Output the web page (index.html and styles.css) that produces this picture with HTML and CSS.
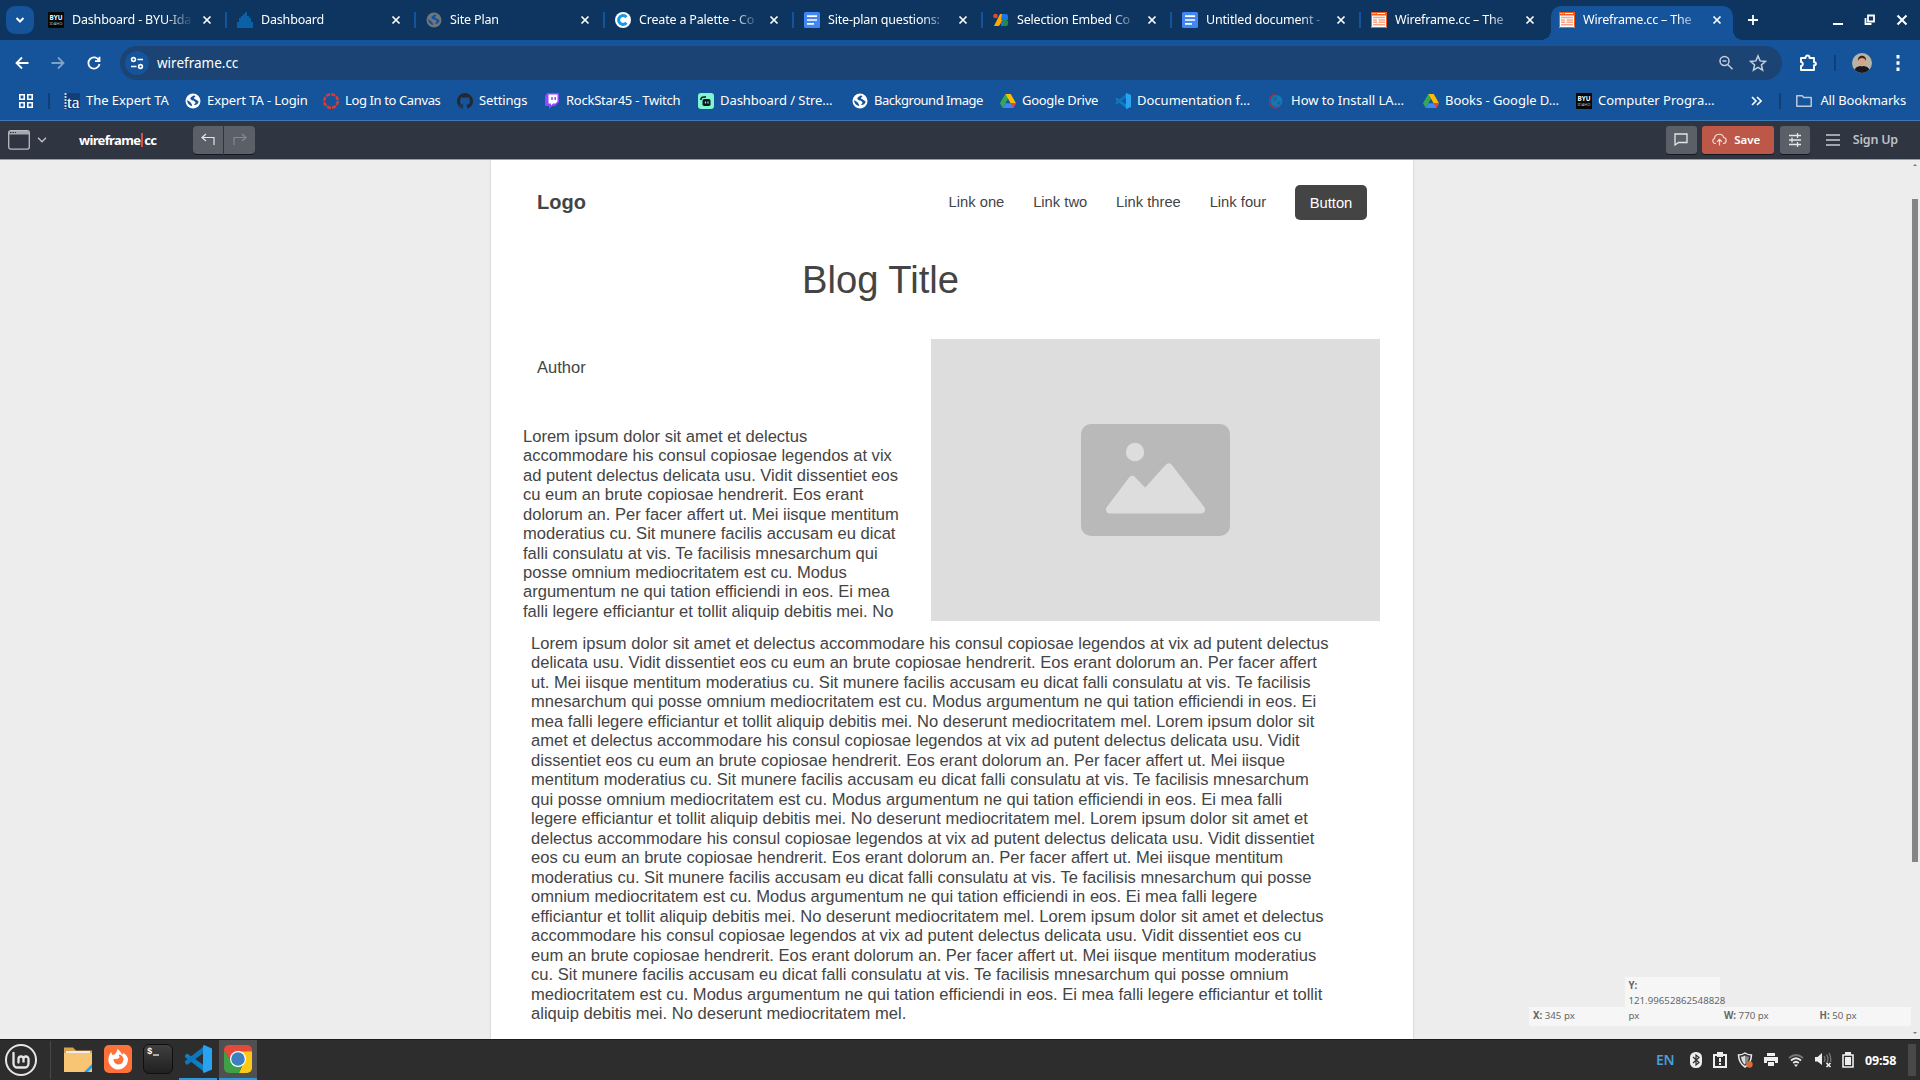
FILE: index.html
```html
<!DOCTYPE html>
<html lang="en">
<head>
<meta charset="utf-8">
<title>Wireframe.cc – The go-to wireframing tool</title>
<link rel="stylesheet" href="styles.css">
</head>
<body>
<svg class="defs" width="0" height="0" aria-hidden="true">
  <symbol id="close" viewBox="0 0 10 10"><path d="M1.500 1.500l7 7M8.500 1.500l-7 7" stroke="currentColor" stroke-width="1.700" fill="none"/></symbol>
  <symbol id="byu" viewBox="0 0 16 16"><path fill="#060606" d="M0 0h16v16H0z"/><text x="8" y="7.600" font-size="6.200" font-weight="700" text-anchor="middle" fill="#fff" textLength="13" lengthAdjust="spacingAndGlyphs">BYU</text><text x="8" y="12.500" font-size="4" text-anchor="middle" fill="#bbb" textLength="13" lengthAdjust="spacingAndGlyphs">IDAHO</text></symbol>
  <symbol id="globe" viewBox="0 0 16 16"><circle cx="8" cy="8" r="7.500" fill="currentColor"/><path class="land" d="M8.500 2.500c-1 1-3.500 1.500-3 3.500.5 1.500 2 1.500 3 1.500.8 1 2 1 2 2s-1 1.200-1.500 2.500c2 .5 4.500-1 4.500-3.500 0-.8-1.500-.5-2-1.500s-2.500-.8-2.500-1.800 1.500-1.200 1.500-2.200zM2 7c.2 3 2 5.500 5 6 .5-1-.5-2-1-3S3.500 8 2 7z"/></symbol>
  <symbol id="doc" viewBox="0 0 16 16"><rect width="16" height="16" rx="1.500" fill="#4285f4"/><path d="M3 4.200h10M3 8h10M3 11.800h7" stroke="#fff" stroke-width="1.700"/></symbol>
  <symbol id="wire" viewBox="0 0 16 16"><path fill="#fff" d="M0 0h16v16H0z"/><path d="M.5.500h15v15H.5z" fill="none" stroke="#f4591e"/><path fill="#f4591e" d="M0 0h16v3.500H0z"/><path fill="#fff" d="M1.500 1h1v1h-1zM3.500 1h1v1h-1zM6 1h8v1H6z"/><path d="M2 5.500h12M2 8h4M7.500 8H14M2 10.200h4M7.500 10.200H14M2 12.800h12" stroke="#f8a585" stroke-width="1.400"/></symbol>
  <symbol id="drive" viewBox="0 0 16 14"><path fill="#34a853" d="M5.300 0L0 9.300 2.700 14 8 4.700z"/><path fill="#fbbc04" d="M5.300 0h5.400L16 9.300h-5.400z"/><path fill="#4285f4" d="M2.700 14h10.600L16 9.300H5.300z"/><path fill="#ea4335" d="M13.300 14L16 9.300h-5.300z"/></symbol>
  <symbol id="vscode" viewBox="0 0 28 28"><path fill="#0d7fc9" d="M1 10.200L3 8.500 21 21v6.500L1 12z"/><path fill="#0f76bd" d="M1 18L3 20 21 7V.5L1 16z"/><path fill="#27a3f0" d="M20 0l8 3.500v21L20 28l-1-1V1z"/></symbol>
</svg>

<header class="tabstrip">
  <button class="tab-search"><svg width="10" height="8" viewBox="0 0 10 8"><path d="M1.500 2L5 5.500 8.500 2" fill="none" stroke="#fff" stroke-width="2"/></svg></button>
  <div class="tab"><svg class="fav"><use href="#byu"/></svg><span class="title">Dashboard - BYU-Idaho</span><svg class="x"><use href="#close"/></svg></div>
  <div class="tab"><svg class="fav" viewBox="0 0 16 16"><path d="M1 16V10M3 16V6M5 16V4M7 16V2M9 16V0M11 16V4M13 16V6M15 16V10" stroke="#0c79ce" stroke-width="1.300"/></svg><span class="title">Dashboard</span><svg class="x"><use href="#close"/></svg></div>
  <div class="tab"><svg class="fav gray"><use href="#globe"/></svg><span class="title">Site Plan</span><svg class="x"><use href="#close"/></svg></div>
  <div class="tab"><svg class="fav" viewBox="0 0 16 16"><circle cx="8" cy="8" r="8" fill="#fff"/><path d="M11.400 5.200A4.400 4.400 0 1 0 11.400 10.800" fill="none" stroke="#149be8" stroke-width="3"/></svg><span class="title">Create a Palette - Co</span><svg class="x"><use href="#close"/></svg></div>
  <div class="tab"><svg class="fav"><use href="#doc"/></svg><span class="title">Site-plan questions:</span><svg class="x"><use href="#close"/></svg></div>
  <div class="tab"><svg class="fav" viewBox="0 0 16 16"><circle cx="2.500" cy="4" r="2.300" fill="#ea4335"/><path d="M7 2h4v4L6 14H1z" fill="#fbab00"/><path d="M9 2h4a2 2 0 0 1 2 2v4H8z" fill="#1a73e8"/><circle cx="12" cy="11" r="3.200" fill="#1e8e3e"/><path d="M8 9h2v5H8z" fill="#1a73e8"/></svg><span class="title">Selection Embed Co</span><svg class="x"><use href="#close"/></svg></div>
  <div class="tab"><svg class="fav"><use href="#doc"/></svg><span class="title">Untitled document -</span><svg class="x"><use href="#close"/></svg></div>
  <div class="tab last"><svg class="fav"><use href="#wire"/></svg><span class="title">Wireframe.cc – The</span><svg class="x"><use href="#close"/></svg></div>
  <div class="tab active"><svg class="fav"><use href="#wire"/></svg><span class="title">Wireframe.cc – The</span><svg class="x"><use href="#close"/></svg></div>
  <svg class="plus" width="12" height="12" viewBox="0 0 12 12"><path d="M6 1v10M1 6h10" stroke="#fff" stroke-width="1.800"/></svg>
  <div class="window-controls">
    <svg width="12" height="12" viewBox="0 0 12 12"><path d="M1 10h10" stroke="#fff" stroke-width="2"/></svg>
    <svg width="12" height="12" viewBox="0 0 12 12"><path d="M4 1.500h6v6H4zM1.500 4v6h6" stroke="#fff" stroke-width="1.800" fill="none"/></svg>
    <svg width="12" height="12" viewBox="0 0 12 12"><path d="M1.500 1.500l9 9M10.500 1.500l-9 9" stroke="#fff" stroke-width="2"/></svg>
  </div>
</header>

<div class="toolbar">
  <svg class="nav" viewBox="0 0 16 16"><path d="M14.500 8H3M8 2.500L2.500 8 8 13.500" fill="none" stroke="#fff" stroke-width="1.800"/></svg>
  <svg class="nav dim" viewBox="0 0 16 16"><path d="M1.500 8H13M8 2.500L13.500 8 8 13.500" fill="none" stroke="#fff" stroke-width="1.800"/></svg>
  <svg class="nav" viewBox="0 0 16 16"><path d="M13 5.500A5.600 5.600 0 1 0 13.500 9M13.500 1.800v4.400H9" fill="none" stroke="#fff" stroke-width="1.800"/></svg>
  <div class="omnibox">
    <span class="site-info"><svg width="14" height="14" viewBox="0 0 14 14"><g fill="none" stroke="#fff" stroke-width="1.600"><circle cx="3.500" cy="3.500" r="1.900"/><path d="M7.500 3.500H13M1 10.500h5.500"/><circle cx="10.500" cy="10.500" r="1.900"/></g></svg></span>
    <span class="url">wireframe.cc</span>
    <svg class="lens" width="16" height="16" viewBox="0 0 16 16"><g fill="none" stroke="#c6cfda" stroke-width="1.500"><circle cx="6.500" cy="6" r="4.500"/><path d="M4.500 6h4M9.800 9.500l4.700 4.700"/></g></svg>
    <svg width="18" height="18" viewBox="0 0 18 18"><path d="M9 2l2.100 4.900 5.300.5-4 3.500 1.200 5.200L9 13.400l-4.600 2.700 1.200-5.200-4-3.500 5.300-.5z" fill="none" stroke="#c6cfda" stroke-width="1.500"/></svg>
  </div>
  <svg class="ext" width="18" height="18" viewBox="0 0 18 18"><path d="M2 4h4.500V3.500a2 2 0 0 1 4 0V4H15v4.300h.5a1.400 1.400 0 0 1 0 2.900H15V16H2v-4c2.200 0 2.600-4 0-4z" fill="none" stroke="#fff" stroke-width="1.900" stroke-linejoin="round"/></svg>
  <span class="sep tsep"></span>
  <svg class="avatar" width="20" height="20" viewBox="0 0 20 20"><clipPath id="av"><circle cx="10" cy="10" r="10"/></clipPath><g clip-path="url(#av)"><path fill="#b9b3a4" d="M0 0h20v20H0z"/><path fill="#18191e" d="M2 20c0-6 4-7 8-7s8 1 8 7z"/><ellipse cx="10" cy="8.500" rx="3.600" ry="5" fill="#d9a385"/><path fill="#3a2420" d="M6 8c-1-7 9-7 8 0-1-4-7-4-8 0z"/></g></svg>
  <svg class="dots" width="4" height="16" viewBox="0 0 4 16"><path fill="#fff" d="M.5 0h3v3.500h-3zM.5 6.200h3v3.500h-3zM.5 12.500h3V16h-3z"/></svg>
</div>

<nav class="bookmarks">
  <svg class="apps" width="14" height="14" viewBox="0 0 14 14"><path d="M.8.800h4.400v4.400H.8zM8.800.800h4.400v4.400H8.800zM.8 8.800h4.400v4.400H.8zM8.800 8.800h4.400v4.400H8.800z" fill="none" stroke="#fff" stroke-width="1.600"/></svg>
  <span class="sep bsep"></span>
  <a class="bm b1"><svg viewBox="0 0 16 16"><path fill="#123f78" d="M0 0h16v16H0z"/><path d="M1.500 0v16" stroke="#cbd6e4" stroke-width="2" stroke-dasharray="2 1"/><text x="3" y="15" font-size="17" font-family="Liberation Serif" fill="#fff" textLength="12.500" lengthAdjust="spacingAndGlyphs">ta</text></svg><span>The Expert TA</span></a>
  <a class="bm b2"><svg class="white"><use href="#globe"/></svg><span>Expert TA - Login</span></a>
  <a class="bm b3"><svg viewBox="0 0 16 16"><circle cx="8" cy="8" r="6.800" fill="none" stroke="#e23a2e" stroke-width="2.400" stroke-dasharray="4.200 1.140"/></svg><span>Log In to Canvas</span></a>
  <a class="bm b4"><svg viewBox="0 0 16 16"><path fill="#24292f" d="M8 0a8 8 0 0 0-2.500 15.600c.4.100.5-.2.500-.4v-1.500c-2 .5-2.600-.5-2.800-1-.1-.3-.6-1.100-1-1.300 1.200-.2 1.500.8 2 1.300.6.600 1.300.4 1.900.2.100-.5.300-.8.500-1C4.800 11.700 3 11 3 8c0-.8.300-1.500.8-2.100-.1-.2-.3-1 .1-2 0 0 .7-.2 2.200.8 1.200-.3 2.600-.3 3.800 0 1.500-1 2.200-.8 2.200-.8.400 1 .2 1.800.1 2 .5.600.8 1.300.8 2.100 0 3-1.800 3.700-3.600 3.900.4.400.6.900.6 1.500v1.800c0 .2.100.5.500.4A8 8 0 0 0 8 0z"/></svg><span>Settings</span></a>
  <a class="bm b5"><svg viewBox="0 0 16 16"><path fill="#9146ff" d="M3 0h12v9l-4 4H8l-3 3v-3H1V3z"/><path fill="#fff" d="M4.500 1.500h9v7l-2 2H9l-2 2v-2H4.500z"/><path d="M8 4v3M11.200 4v3" stroke="#9146ff" stroke-width="1.500"/></svg><span>RockStar45 - Twitch</span></a>
  <a class="bm b6"><svg viewBox="0 0 16 16"><rect width="16" height="16" rx="3" fill="#80f5d2"/><rect x="4.500" y="6" width="8" height="7" rx="1.800" fill="#09161d"/><path d="M3 7V5.500Q3.500 4 6 4h2" fill="none" stroke="#09161d" stroke-width="1.500"/><path d="M7.500 8.500v2M10 8.500v2" stroke="#80f5d2" stroke-width="1.200"/></svg><span>Dashboard / Stre…</span></a>
  <a class="bm b7"><svg class="white"><use href="#globe"/></svg><span>Background Image</span></a>
  <a class="bm b8"><svg><use href="#drive"/></svg><span>Google Drive</span></a>
  <a class="bm b9"><svg><use href="#vscode"/></svg><span>Documentation f…</span></a>
  <a class="bm b10"><svg viewBox="0 0 16 16"><circle cx="7.500" cy="8" r="6" fill="#1279b5"/><path d="M11 13.500A6.700 6.700 0 1 1 6 1.500" fill="none" stroke="#b82a3e" stroke-width="1.300"/><path d="M4 5l3-1 1 3-3 1zM9 8l3 1-2 3-2-1z" fill="#1f619d"/></svg><span>How to Install LA…</span></a>
  <a class="bm b11"><svg><use href="#drive"/></svg><span>Books - Google D…</span></a>
  <a class="bm b12"><svg><use href="#byu"/></svg><span>Computer Progra…</span></a>
  <svg class="more" width="11" height="10" viewBox="0 0 11 10"><path d="M1 1l4 4-4 4M6 1l4 4-4 4" fill="none" stroke="#fff" stroke-width="1.600"/></svg>
  <span class="sep msep"></span>
  <a class="bm all"><svg viewBox="0 0 16 16"><path d="M.8 2.800h5.400l1.600 1.700h7.400v8.700H.8z" fill="none" stroke="#bcc9da" stroke-width="1.500" stroke-linejoin="round"/></svg><span>All Bookmarks</span></a>
</nav>

<div class="appbar">
  <svg class="device" width="22" height="20" viewBox="0 0 22 20"><rect x=".7" y=".7" width="20.600" height="18.400" rx="2" fill="none" stroke="#b9bcc1" stroke-width="1.300"/><path d="M1 1h20v3.500H1z" fill="#a5a8ae"/><path d="M2 2.500h6" stroke="#2f3541" stroke-dasharray="1.500 1"/></svg>
  <svg class="chev" width="10" height="6" viewBox="0 0 10 6"><path d="M1 .8l4 4 4-4" fill="none" stroke="#c4c6ca" stroke-width="1.300"/></svg>
  <span class="brand">wireframe<i></i>cc</span>
  <button class="btn undo"><svg width="14" height="13" viewBox="0 0 14 13"><path d="M5 1L1 4.500 5 8M1 4.500h12V12" fill="none" stroke="#e4e5e7" stroke-width="1.200"/></svg></button>
  <button class="btn redo"><svg width="14" height="13" viewBox="0 0 14 13"><path d="M9 1l4 3.500L9 8M13 4.500H1V12" fill="none" stroke="#858990" stroke-width="1.200"/></svg></button>
  <button class="btn note"><svg width="14" height="13" viewBox="0 0 14 13"><path d="M1 1h12v8.500H4.500L1 12z" fill="none" stroke="#e4e5e7" stroke-width="1.300"/></svg></button>
  <button class="btn save"><svg width="15" height="13" viewBox="0 0 15 13"><path d="M4 10.500H3A2.600 2.600 0 0 1 2.500 5.500C3 0 11 0 11.500 4.500c3.500 0 3.500 6 0 6H11M7.500 12.500V6.500M5 8.800l2.500-2.500L10 8.800" fill="none" stroke="#f5dcd8" stroke-width="1.200"/></svg>Save</button>
  <button class="btn sliders"><svg width="14" height="14" viewBox="0 0 14 14"><path d="M1 2.500h12M1 7h12M1 11.500h12M9.500 0v5M4 4.500v5M9.500 9v5" fill="none" stroke="#e4e5e7" stroke-width="1.300"/></svg></button>
  <svg class="burger" width="14" height="12" viewBox="0 0 14 12"><path d="M0 1h14M0 6h14M0 11h14" stroke="#c9cbcf" stroke-width="1.300"/></svg>
  <span class="signup">Sign Up</span>
</div>

<main class="workspace">
  <article class="page">
    <div class="page-nav">
      <strong class="logo">Logo</strong>
      <a>Link one</a><a>Link two</a><a>Link three</a><a>Link four</a>
      <span class="cta">Button</span>
    </div>
    <h1>Blog Title</h1>
    <section class="hero">
      <div class="hero-text">
        <p class="author">Author</p>
        <p class="copy intro">Lorem ipsum dolor sit amet et delectus<br>accommodare his consul copiosae legendos at vix<br>ad putent delectus delicata usu. Vidit dissentiet eos<br>cu eum an brute copiosae hendrerit. Eos erant<br>dolorum an. Per facer affert ut. Mei iisque mentitum<br>moderatius cu. Sit munere facilis accusam eu dicat<br>falli consulatu at vis. Te facilisis mnesarchum qui<br>posse omnium mediocritatem est cu. Modus<br>argumentum ne qui tation efficiendi in eos. Ei mea<br>falli legere efficiantur et tollit aliquip debitis mei. No</p>
      </div>
      <div class="picture"><svg width="149" height="112" viewBox="0 0 149 112"><rect width="149" height="112" rx="10" fill="#b9b9b9"/><circle cx="54" cy="28" r="9.200" fill="#ddd"/><path d="M29 85.500L51.300 56 64.300 69.500 87.700 43.500 120 85.500z" fill="#ddd" class="peaks"/></svg></div>
    </section>
    <p class="copy body-copy">Lorem ipsum dolor sit amet et delectus accommodare his consul copiosae legendos at vix ad putent delectus<br>delicata usu. Vidit dissentiet eos cu eum an brute copiosae hendrerit. Eos erant dolorum an. Per facer affert<br>ut. Mei iisque mentitum moderatius cu. Sit munere facilis accusam eu dicat falli consulatu at vis. Te facilisis<br>mnesarchum qui posse omnium mediocritatem est cu. Modus argumentum ne qui tation efficiendi in eos. Ei<br>mea falli legere efficiantur et tollit aliquip debitis mei. No deserunt mediocritatem mel. Lorem ipsum dolor sit<br>amet et delectus accommodare his consul copiosae legendos at vix ad putent delectus delicata usu. Vidit<br>dissentiet eos cu eum an brute copiosae hendrerit. Eos erant dolorum an. Per facer affert ut. Mei iisque<br>mentitum moderatius cu. Sit munere facilis accusam eu dicat falli consulatu at vis. Te facilisis mnesarchum<br>qui posse omnium mediocritatem est cu. Modus argumentum ne qui tation efficiendi in eos. Ei mea falli<br>legere efficiantur et tollit aliquip debitis mei. No deserunt mediocritatem mel. Lorem ipsum dolor sit amet et<br>delectus accommodare his consul copiosae legendos at vix ad putent delectus delicata usu. Vidit dissentiet<br>eos cu eum an brute copiosae hendrerit. Eos erant dolorum an. Per facer affert ut. Mei iisque mentitum<br>moderatius cu. Sit munere facilis accusam eu dicat falli consulatu at vis. Te facilisis mnesarchum qui posse<br>omnium mediocritatem est cu. Modus argumentum ne qui tation efficiendi in eos. Ei mea falli legere<br>efficiantur et tollit aliquip debitis mei. No deserunt mediocritatem mel. Lorem ipsum dolor sit amet et delectus<br>accommodare his consul copiosae legendos at vix ad putent delectus delicata usu. Vidit dissentiet eos cu<br>eum an brute copiosae hendrerit. Eos erant dolorum an. Per facer affert ut. Mei iisque mentitum moderatius<br>cu. Sit munere facilis accusam eu dicat falli consulatu at vis. Te facilisis mnesarchum qui posse omnium<br>mediocritatem est cu. Modus argumentum ne qui tation efficiendi in eos. Ei mea falli legere efficiantur et tollit<br>aliquip debitis mei. No deserunt mediocritatem mel.</p>
  </article>
  <div class="readout">
    <span><b>X:</b> 345 px</span>
    <span class="y"><b>Y:</b><br>121.99652862548828<br>px</span>
    <span><b>W:</b> 770 px</span>
    <span><b>H:</b> 50 px</span>
  </div>
  <div class="scrollbar"><i class="up"></i><i class="thumb"></i><i class="down"></i></div>
</main>

<footer class="taskbar">
  <svg class="mint" width="32" height="32" viewBox="0 0 32 32"><circle cx="16" cy="16" r="15" fill="none" stroke="#e6e6e6" stroke-width="2"/><path d="M8.500 9v10.500a4 4 0 0 0 4 4h7a4 4 0 0 0 4-4V15a2.500 2.500 0 0 0-5 0v3.500V15a2.500 2.500 0 0 0-5 0v3.500" fill="none" stroke="#e6e6e6" stroke-width="2.300" stroke-linecap="round"/></svg>
  <span class="task-sep"></span>
  <span class="task"><svg width="28" height="28" viewBox="0 0 28 28"><path fill="#d9a24d" d="M0 2.500h9l3 3h16V14H0z"/><path fill="#eee" d="M2 6h24v4H2z"/><path fill="#f8c575" d="M0 8h28v19H0z"/><path fill="#27a0e6" d="M28 19v4l-4 4h-4z"/></svg></span>
  <span class="task"><svg width="28" height="28" viewBox="0 0 28 28"><rect width="28" height="28" rx="5" fill="#ff7139"/><path fill="#fff" d="M14 24.500A10 10 0 0 1 5 11c.5-1.500 1.500-2.500 2-4l1.500 3 2-.5c1-1 2-2 3-5.500 2 2 4 3 4.500 6l1.500-2c3 2 4.500 4 4.500 7a10 10 0 0 1-10 9.500z"/><path fill="#ff7139" d="M9.500 14a5 5 0 1 0 8-3.500c-1-.8-2-1-3-.500 1 1 1.500 2 .5 3s-2 .5-3 1.200z"/></svg></span>
  <span class="task"><svg width="30" height="30" viewBox="0 0 30 30"><defs><linearGradient id="term" x2="0" y2="1"><stop stop-color="#404040"/><stop offset="1" stop-color="#202020"/></linearGradient></defs><rect x=".5" y=".5" width="29" height="29" rx="5.500" fill="url(#term)" stroke="#101010"/><text x="4" y="10" font-family="Liberation Mono" font-size="9" font-weight="700" fill="#fff">$</text><path d="M10 11h6" stroke="#fff" stroke-width="1.200"/></svg></span>
  <span class="task open"><svg width="28" height="28"><use href="#vscode"/></svg></span>
  <span class="task open current"><svg width="28" height="28" viewBox="0 0 28 28"><clipPath id="sq"><rect width="28" height="28" rx="5"/></clipPath><g clip-path="url(#sq)"><path fill="#e5493a" d="M0 0h28v8H14L8 17 0 6z"/><path fill="#3ea146" d="M0 6l8.500 12L19 17l-4 11H0z"/><path fill="#fbc916" d="M14 6.500h14V28H15l5-11z"/></g><circle cx="14" cy="14" r="8" fill="#fff"/><circle cx="14" cy="14" r="6.800" fill="#3d7fbf"/></svg></span>
  <span class="lang">EN</span>
  <div class="tray">
    <svg width="12" height="16" viewBox="0 0 12 16"><rect width="12" height="16" rx="5.500" fill="#eee"/><path d="M3 5l6 5.500L6 13V3l3 2.500L3 11" fill="none" stroke="#2d2d2d" stroke-width="1.200"/></svg>
    <svg width="14" height="16" viewBox="0 0 14 16"><path d="M1 3h12v12H1z" fill="none" stroke="#eee" stroke-width="2"/><path fill="#eee" d="M4 0h6v5H4zM6 6h2v4H6zM6 11h2v2H6z"/></svg>
    <svg width="16" height="16" viewBox="0 0 16 16"><path d="M8 1q3 2 6.500 2-.3 8-6.500 12Q1.800 11 1.500 3 5 3 8 1z" fill="#333" stroke="#eee" stroke-width="1.500"/><path d="M8 3.500q2 1.200 4 1.300-.3 5-4 8z" fill="#8b8b8b"/><path d="M8 3.500q-2 1.200-4 1.300.3 5 4 8z" fill="#ddd"/><circle cx="12.500" cy="12.500" r="3.200" fill="#e06a34"/></svg>
    <svg width="14" height="14" viewBox="0 0 14 14"><path fill="#eee" d="M3 0h8v3H3zM0 4h14v6h-3V8H3v2H0zM4 9h6v4H4z"/></svg>
    <svg width="16" height="14" viewBox="0 0 16 14"><path d="M1 5q7-6 14 0" stroke="#777" stroke-width="1.800" fill="none"/><path d="M3 7.500q5-4.500 10 0M5.200 10q2.800-2.500 5.600 0" stroke="#eee" stroke-width="1.800" fill="none"/><path fill="#eee" d="M6 11.500h4L8 14z"/></svg>
    <svg width="17" height="16" viewBox="0 0 17 16"><path fill="#eee" d="M0 5h2.500L7 1v12L2.500 9.500H0z"/><path d="M9 4q2 3 0 6M11.500 2.500q3 4.500 0 9M14 1q2.500 4.500 1.500 9" fill="none" stroke="#777" stroke-width="1.300"/><path d="M11.500 11l4 4M15.500 11l-4 4" stroke="#eee" stroke-width="1.700"/></svg>
    <svg width="12" height="16" viewBox="0 0 12 16"><path d="M1 3h10v12H1z" fill="none" stroke="#eee" stroke-width="1.600"/><path fill="#eee" d="M3 0h6v3H3zM3 5h6v8H3z"/></svg>
  </div>
  <time class="clock">09:58</time>
  <span class="show-desktop"></span>
</footer>
</body>
</html>
```
FILE: styles.css
```css
* { box-sizing: border-box; }
body { margin: 0; width: 1920px; height: 1080px; overflow: hidden; display: flex; flex-direction: column; font-family: "Noto Sans", sans-serif; font-size: 12.5px; color: #fff; background: #15539a; }
svg { flex: none; display: block; }
.defs { position: absolute; }
button { border: 0; padding: 0; font: inherit; color: inherit; }
.sep { width: 2px; height: 16px; background: #0f3f76; flex: none; }

.tabstrip { height: 40px; flex: none; display: flex; align-items: center; background: #0d355f; padding-left: 6px; }
.tab-search { width: 28px; height: 28px; border-radius: 9px; background: #15539a; display: flex; align-items: center; justify-content: center; margin-right: 4px; flex: none; }
.tab { width: 189px; height: 16px; flex: none; display: flex; align-items: center; padding: 0 13px 0 10px; border-right: 2px solid #15539a; }
.tab.last { border-color: transparent; }
.tab.active { width: 182px; height: 34px; align-self: flex-end; background: #15539a; border: 0; border-radius: 10px 10px 0 0; padding: 0 11px 6px 8px; position: relative; margin-left: 1px; }
.tab.active::before, .tab.active::after { content: ""; position: absolute; bottom: 0; width: 10px; height: 10px; }
.tab.active::before { left: -10px; background: radial-gradient(circle at 0 0, transparent 10px, #15539a 10px); }
.tab.active::after { right: -10px; background: radial-gradient(circle at 100% 0, transparent 10px, #15539a 10px); }
.fav { width: 16px; height: 16px; margin-right: 8px; }
.gray { color: #737678; }
.gray .land { fill: #0d355f; }
.white { color: #fff; }
.land { fill: #15539a; }
.title { width: 120px; overflow: hidden; white-space: nowrap; line-height: 20px; letter-spacing: -.18px; -webkit-mask-image: linear-gradient(90deg, #000 94px, transparent 121px); mask-image: linear-gradient(90deg, #000 94px, transparent 121px); }
.x { width: 10px; height: 10px; margin-left: auto; }
.plus { margin-left: 14px; }
.window-controls { display: flex; gap: 20px; margin-left: auto; padding-right: 12px; }

.toolbar { height: 46px; flex: none; display: flex; align-items: center; padding: 0 20px 0 14px; border-radius: 10px 10px 0 0; }
.nav { width: 16px; height: 16px; margin-right: 20px; }
.nav.dim { opacity: .45; }
.omnibox { height: 34px; width: 1662px; margin-left: -2px; border-radius: 17px; background: #1b4474; display: flex; align-items: center; padding: 0 15px 0 5px; flex: none; }
.site-info { width: 24px; height: 24px; border-radius: 50%; background: #15539a; display: flex; align-items: center; justify-content: center; margin-right: 8px; }
.url { font-size: 13.5px; }
.lens { margin-left: auto; margin-right: 15px; }
.ext { margin-left: 17px; }
.tsep { margin: 0 16px 0 17px; }
.dots { margin-left: auto; }

.bookmarks { height: 35px; flex: none; display: flex; align-items: center; padding: 0 14px 5px 19px; border-bottom: 1px solid #4378b0; font-size: 13px; letter-spacing: -.15px; }
.bsep { margin: 0 14px 0 15px; }
.bm { display: flex; align-items: center; gap: 6px; white-space: nowrap; flex: none; }
.bm svg { width: 16px; height: 16px; }
.bm span { padding-bottom: 2px; }
.b1 { width: 121px; letter-spacing: -.05px; }
.b2 { width: 138px; letter-spacing: -.1px; }
.b3 { width: 134px; letter-spacing: -.38px; }
.b4 { width: 87px; }
.b5 { width: 154px; letter-spacing: -.25px; }
.b6 { width: 154px; letter-spacing: -.05px; }
.b7 { width: 148px; letter-spacing: -.48px; }
.b8 { width: 115px; letter-spacing: -.28px; }
.b9 { width: 154px; letter-spacing: 0; }
.b10 { width: 154px; letter-spacing: 0; }
.b11 { width: 153px; letter-spacing: -.05px; }
.b12 { width: 138px; letter-spacing: 0; }
.more { margin-left: 37px; }
.msep { margin-left: 17px; }
.all { margin-left: auto; gap: 8px; }

.appbar { height: 39px; flex: none; display: flex; align-items: center; background: #2f3541; border-bottom: 1px solid #9b9ea4; padding: 0 22px 1px 8px; font-weight: 700; }
.chev { margin-left: 7px; }
.brand { width: 114px; margin-left: 32px; display: flex; align-items: center; letter-spacing: -.65px; font-size: 13px; }
.brand i { width: 2px; height: 14px; background: #d84f3f; margin: 0 1px; }
.btn { height: 28px; background: #5b5f68; border-radius: 3px; box-shadow: 0 1px 0 #16181d; display: flex; align-items: center; justify-content: center; flex: none; }
.undo { width: 30px; border-radius: 4px 0 0 4px; margin-right: 1px; }
.redo { width: 31px; border-radius: 0 4px 4px 0; }
.note { width: 31px; margin-left: auto; }
.save { width: 72px; margin: 0 6px 0 5px; background: #bd5849; gap: 7px; font-weight: 600; font-size: 11.5px; padding-right: 3px; }
.sliders { width: 30px; }
.burger { margin-left: 16px; }
.signup { margin-left: 13px; color: #bfc1c5; letter-spacing: -.2px; font-weight: 600; }

.workspace { flex: 1; min-height: 0; overflow: hidden; position: relative; background: #ededed; }
.page { width: 922px; height: 879px; margin-left: 491px; background: #fff; box-shadow: 0 0 2px #bbb; color: #444; font-family: "Liberation Sans", Arial, sans-serif; overflow: hidden; }
.page-nav { display: flex; align-items: center; gap: 28.8px; height: 35px; margin: 25px 46px 0; font-size: 14.75px; }
.page-nav a { padding-bottom: 2px; }
.logo { font-size: 20px; margin-right: auto; }
.cta { width: 72px; height: 35px; border-radius: 5px; background: #444; color: #fff; display: flex; align-items: center; justify-content: center; }
h1 { font-weight: 400; font-size: 38.2px; line-height: 44px; margin: 38px 0 0 311px; }
.hero { display: flex; margin-top: 37px; padding: 0 33px 0 32px; height: 282px; justify-content: space-between; }
.author { margin: 19px 0 0 14px; font-size: 16.55px; line-height: 19px; }
.copy { margin: 0; font-size: 16.56px; line-height: 19.48px; white-space: nowrap; }
.intro { margin-top: 49.6px; }
.picture { width: 449px; height: 282px; background: #ddd; display: flex; align-items: center; justify-content: center; }
.peaks { stroke: #ddd; stroke-width: 8px; stroke-linejoin: round; }
.body-copy { margin: 13px 0 0 40px; }

.readout { position: absolute; right: 9px; bottom: 13px; width: 382px; height: 49px; display: flex; align-items: flex-end; color: #666; font-size: 9.7px; line-height: 15px; }
.readout span { flex: 1 1 0; min-width: 0; height: 19px; background: #f6f6f6; padding: 1px 0 0 4px; white-space: nowrap; }
.readout .y { height: 49px; }
.scrollbar { position: absolute; right: 0; top: 0; width: 10px; height: 100%; }
.scrollbar i { position: absolute; left: 2px; width: 6px; }
.scrollbar .thumb { top: 39px; height: 663px; background: #858585; }
.scrollbar .up, .scrollbar .down { left: 3px; width: 4px; height: 0; border: 2px solid transparent; }
.scrollbar .up { top: 2px; border-bottom-color: #777; }
.scrollbar .down { bottom: 3px; border-top-color: #777; }

.taskbar { height: 41px; flex: none; display: flex; align-items: center; background: #2d2d2d; border-top: 1px solid #1c1c1c; padding: 0 4px 0 5px; }
.task-sep { width: 1px; height: 38px; background: #484848; margin: 0 8px 0 13px; }
.task { width: 38px; height: 40px; margin-right: 2px; display: flex; align-items: center; justify-content: center; padding-bottom: 2px; }
.open { border-bottom: 2px solid #279bdd; padding-bottom: 0; }
.current { background: #505050; }
.lang { margin-left: auto; color: #4b9dd8; font: 600 14px "Noto Sans", sans-serif; letter-spacing: -.5px; margin-right: 16px; padding-bottom: 2px; }
.tray { width: 164px; display: flex; align-items: center; justify-content: space-between; margin-right: 11px; padding-bottom: 1px; }
.clock { font-weight: 700; font-size: 12.5px; width: 35px; letter-spacing: -.2px; margin-right: 8px; white-space: nowrap; }
.show-desktop { width: 8px; height: 32px; background: #484848; }
```
